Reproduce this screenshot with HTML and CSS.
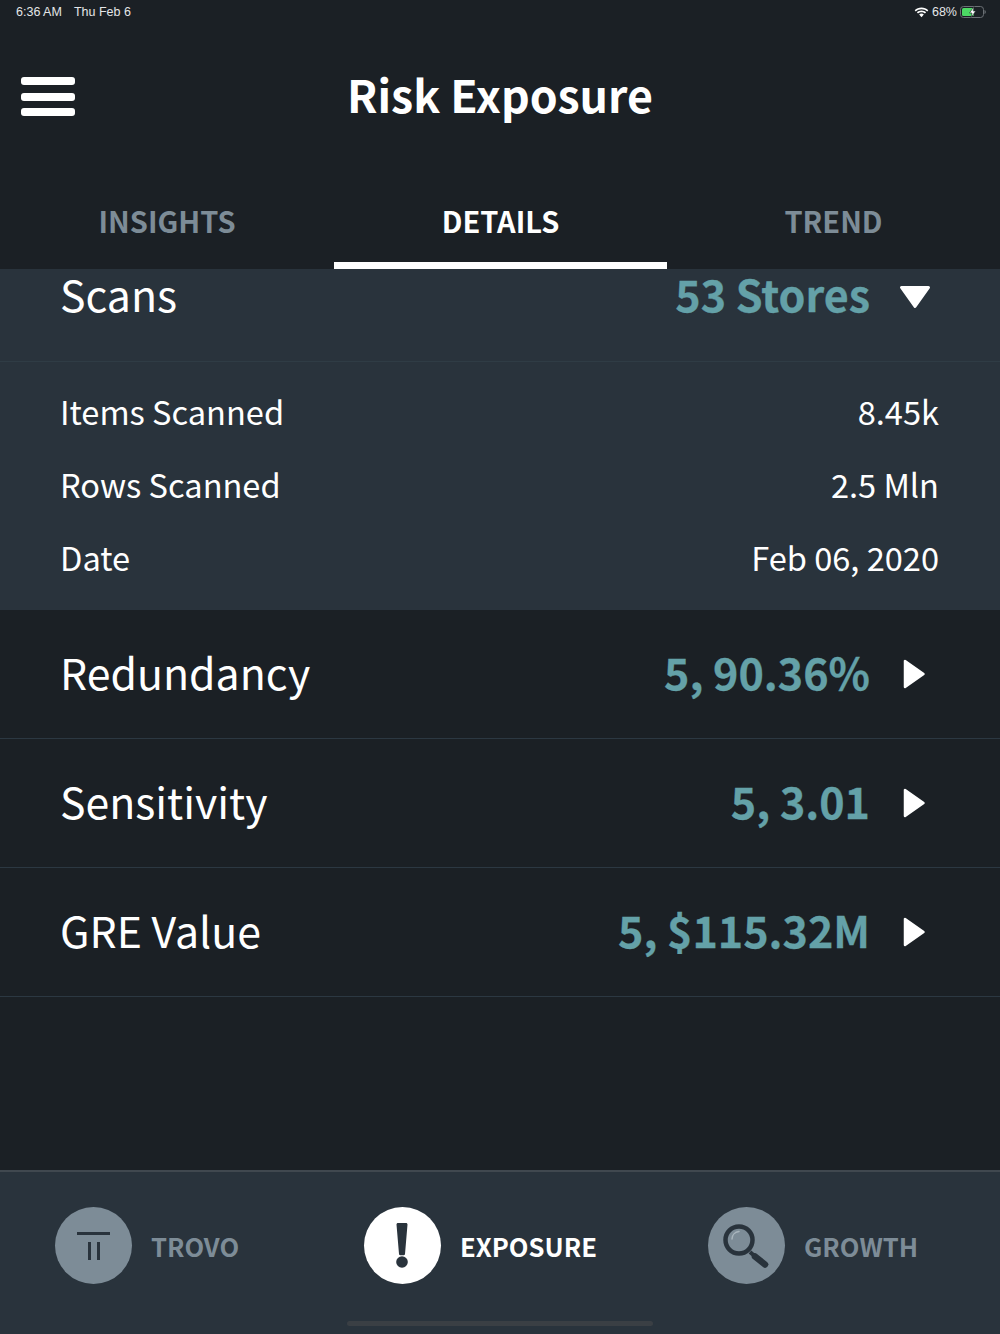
FILE: index.html
```html
<!DOCTYPE html>
<html lang="en">

<head>
    <meta charset="UTF-8">
    <meta name="viewport" content="width=device-width, initial-scale=1.0">
    <title>Risk Exposure</title>
    <link rel="stylesheet" href="styles.css">
</head>

<body>
    <div class="app">
        <div class="status-bar">
            <div class="status-left">
                <span>6:36 AM</span>
                <span>Thu Feb 6</span>
            </div>
            <div class="status-right">
                <svg class="wifi" width="15" height="11" viewBox="0 0 15 11">
                    <path d="M7.5 2.2c2.2 0 4.2.8 5.7 2.2l1.1-1.2C12.500 1.500 10.100.5 7.500.5S2.500 1.500.7 3.200l1.100 1.200C3.300 3 5.300 2.200 7.500 2.200z" fill="#fff" />
                    <path d="M7.500 5.200c1.300 0 2.500.5 3.500 1.300l1.100-1.200C10.900 4.200 9.300 3.500 7.500 3.500s-3.400.7-4.600 1.800L4 6.500c1-.8 2.200-1.300 3.500-1.300z" fill="#fff" />
                    <path d="M7.500 6.600c-.9 0-1.700.3-2.300.9l2.300 2.800 2.300-2.800c-.6-.6-1.400-.9-2.300-.9z" fill="#fff" />
                </svg>
                <span>68%</span>
                <svg class="battery" width="26" height="12" viewBox="0 0 26 12">
                    <rect x="0.500" y="0.500" width="23" height="11" rx="3" fill="none" stroke="#6b7075" />
                    <rect x="2" y="2" width="12" height="8" rx="1.500" fill="#4cd964" />
                    <path d="M24.500 4v4c.8-.2 1.300-1 1.300-2s-.5-1.800-1.300-2z" fill="#6b7075" />
                    <path d="M14 .5L9.500 7H12l-1 4.500L15.800 5h-2.600z" fill="#fff" stroke="#1b2025" stroke-width=".6" />
                </svg>
            </div>
        </div>

        <header class="top-bar">
            <div class="hamburger">
                <span></span>
                <span></span>
                <span></span>
            </div>
            <h1>Risk Exposure</h1>
        </header>

        <nav class="tabs">
            <div class="tab">INSIGHTS</div>
            <div class="tab active">DETAILS</div>
            <div class="tab">TREND</div>
        </nav>

        <main class="content">
            <section class="panel">
                <div class="scans-row">
                    <span class="row-label">Scans</span>
                    <span class="row-value">53 Stores</span>
                    <svg class="arrow-down" width="32" height="24" viewBox="0 0 32 24">
                        <path d="M2.500 2.500h27L16 21.500z" fill="#fff" stroke="#fff" stroke-width="3" stroke-linejoin="round" />
                    </svg>
                </div>
                <div class="scan-details">
                    <div class="detail"><span>Items Scanned</span><span>8.45k</span></div>
                    <div class="detail"><span>Rows Scanned</span><span>2.5 Mln</span></div>
                    <div class="detail"><span>Date</span><span>Feb 06, 2020</span></div>
                </div>
            </section>

            <div class="row">
                <span class="row-label">Redundancy</span>
                <span class="row-value">5, 90.36%</span>
                <svg class="arrow-right" width="24" height="32" viewBox="0 0 24 32">
                    <path d="M2 3v26L20.500 16z" fill="#fff" stroke="#fff" stroke-width="2.500" stroke-linejoin="round" />
                </svg>
            </div>
            <div class="row">
                <span class="row-label">Sensitivity</span>
                <span class="row-value">5, 3.01</span>
                <svg class="arrow-right" width="24" height="32" viewBox="0 0 24 32">
                    <path d="M2 3v26L20.500 16z" fill="#fff" stroke="#fff" stroke-width="2.500" stroke-linejoin="round" />
                </svg>
            </div>
            <div class="row">
                <span class="row-label">GRE Value</span>
                <span class="row-value">5, $115.32M</span>
                <svg class="arrow-right" width="24" height="32" viewBox="0 0 24 32">
                    <path d="M2 3v26L20.500 16z" fill="#fff" stroke="#fff" stroke-width="2.500" stroke-linejoin="round" />
                </svg>
            </div>
        </main>

        <footer class="bottom-nav">
            <div class="nav-item nav-trovo">
                <div class="nav-icon">
                    <svg width="77" height="77" viewBox="0 0 77 77">
                        <rect x="22" y="25" width="33" height="3" fill="#29333c" />
                        <rect x="33" y="35" width="3" height="18" fill="#29333c" />
                        <rect x="42" y="35" width="3" height="18" fill="#29333c" />
                    </svg>
                </div>
                <span>TROVO</span>
            </div>
            <div class="nav-item nav-exposure active">
                <div class="nav-icon">
                    <svg width="77" height="77" viewBox="0 0 77 77">
                        <path d="M32.500 17.500c0-.8.600-1.500 1.500-1.500h8c.9 0 1.500.7 1.500 1.500L41 47c0 .7-.5 1.200-1.200 1.200h-3.600c-.7 0-1.200-.5-1.200-1.200z" fill="#29333c" />
                        <circle cx="38" cy="55" r="5.800" fill="#29333c" />
                    </svg>
                </div>
                <span>EXPOSURE</span>
            </div>
            <div class="nav-item nav-growth">
                <div class="nav-icon">
                    <svg width="77" height="77" viewBox="0 0 77 77">
                        <circle cx="31" cy="33" r="13.500" fill="none" stroke="#29333c" stroke-width="4.500" />
                        <path d="M42 45l4 3.500" stroke="#29333c" stroke-width="4" />
                        <path d="M47 49.500l10 8" stroke="#29333c" stroke-width="6.500" stroke-linecap="round" />
                        <path d="M24 32c0-4 3-7 7-7.500" fill="none" stroke="#a9b5bd" stroke-width="1.500" stroke-linecap="round" />
                    </svg>
                </div>
                <span>GROWTH</span>
            </div>
            <div class="home-indicator"></div>
        </footer>
    </div>
</body>

</html>
```

FILE: styles.css
```css
body {
    font-family: "Noto Sans CJK JP", "Noto Sans", sans-serif;
    margin: 0;
    padding: 0;
    background-color: #1b2025;
    color: #fff;
}

.app {
    display: flex;
    flex-direction: column;
    height: 1334px;
    overflow: hidden;
}

.status-bar {
    display: flex;
    justify-content: space-between;
    align-items: center;
    height: 24px;
    padding: 0 14px 0 16px;
    font-family: "Liberation Sans", Arial, sans-serif;
    font-size: 12.5px;
    color: #e4e6e8;
}

.status-left {
    display: flex;
    gap: 12px;
}

.status-right {
    display: flex;
    align-items: center;
    gap: 3px;
}

.top-bar {
    position: relative;
    display: flex;
    justify-content: center;
    align-items: center;
    height: 145px;
}

.top-bar h1 {
    margin: 0;
    font-size: 44.7px;
    font-weight: 700;
    line-height: 1;
    padding-bottom: 5px;
}

.hamburger {
    position: absolute;
    left: 21px;
    top: 53px;
    display: flex;
    flex-direction: column;
    gap: 7.5px;
}

.hamburger span {
    display: block;
    width: 54px;
    height: 8px;
    background-color: #fff;
    border-radius: 3px;
}

.tabs {
    display: grid;
    grid-template-columns: 334px 333px 333px;
    height: 100px;
}

.tab {
    display: flex;
    justify-content: center;
    align-items: center;
    padding-top: 3px;
    box-sizing: border-box;
    font-size: 29px;
    font-weight: 700;
    line-height: 1;
    color: #7d8c97;
}

.tab.active {
    color: #fff;
    border-bottom: 7px solid #fff;
    padding-top: 10px;
}

.content {
    flex: 1;
}

.panel {
    background-color: #29333c;
}

.scans-row {
    display: flex;
    align-items: flex-start;
    height: 92px;
    border-bottom: 1px solid #2f3c45;
    padding: 0 69px 0 60px;
}

.row {
    display: flex;
    align-items: center;
    height: 128px;
    border-bottom: 1px solid #2c3842;
    padding: 0 73px 0 60px;
}

.row-label {
    flex: 1;
    font-size: 42.8px;
    line-height: 48px;
}

.row .row-label,
.row .row-value {
    padding-bottom: 7px;
}

.row-value {
    font-size: 43px;
    font-weight: 700;
    line-height: 48px;
    color: #64a1a8;
    margin-right: 33px;
    -webkit-text-stroke: 0.3px #64a1a8;
}

.arrow-down {
    margin-top: 16px;
    margin-left: -4px;
    display: block;
}

.arrow-right {
    display: block;
}

.scan-details {
    display: flex;
    flex-direction: column;
    gap: 27px;
    height: 248px;
    box-sizing: border-box;
    padding: 26px 61px 0 60px;
}

.detail {
    display: flex;
    justify-content: space-between;
    font-size: 32.6px;
    line-height: 46px;
}

.bottom-nav {
    position: relative;
    display: grid;
    grid-template-columns: 334px 333px 333px;
    height: 164px;
    background-color: #29333c;
    border-top: 2px solid #40484f;
    box-sizing: border-box;
}

.nav-item {
    display: flex;
    align-items: center;
    gap: 20px;
    padding-bottom: 15px;
    font-size: 25.6px;
    font-weight: 700;
    line-height: 1;
    color: #7d8c97;
}

.nav-item span {
    margin-left: -1px;
}

.nav-item.active {
    color: #fff;
}

.nav-trovo {
    padding-left: 55px;
}

.nav-exposure {
    padding-left: 30px;
}

.nav-growth {
    padding-left: 41px;
}

.nav-icon {
    width: 77px;
    height: 77px;
    border-radius: 50%;
    background-color: #7d8c97;
}

.nav-icon svg {
    display: block;
}

.active .nav-icon {
    background-color: #fff;
}

.home-indicator {
    position: absolute;
    left: 347px;
    bottom: 8px;
    width: 306px;
    height: 5px;
    border-radius: 3px;
    background-color: #3a3f44;
}
```
